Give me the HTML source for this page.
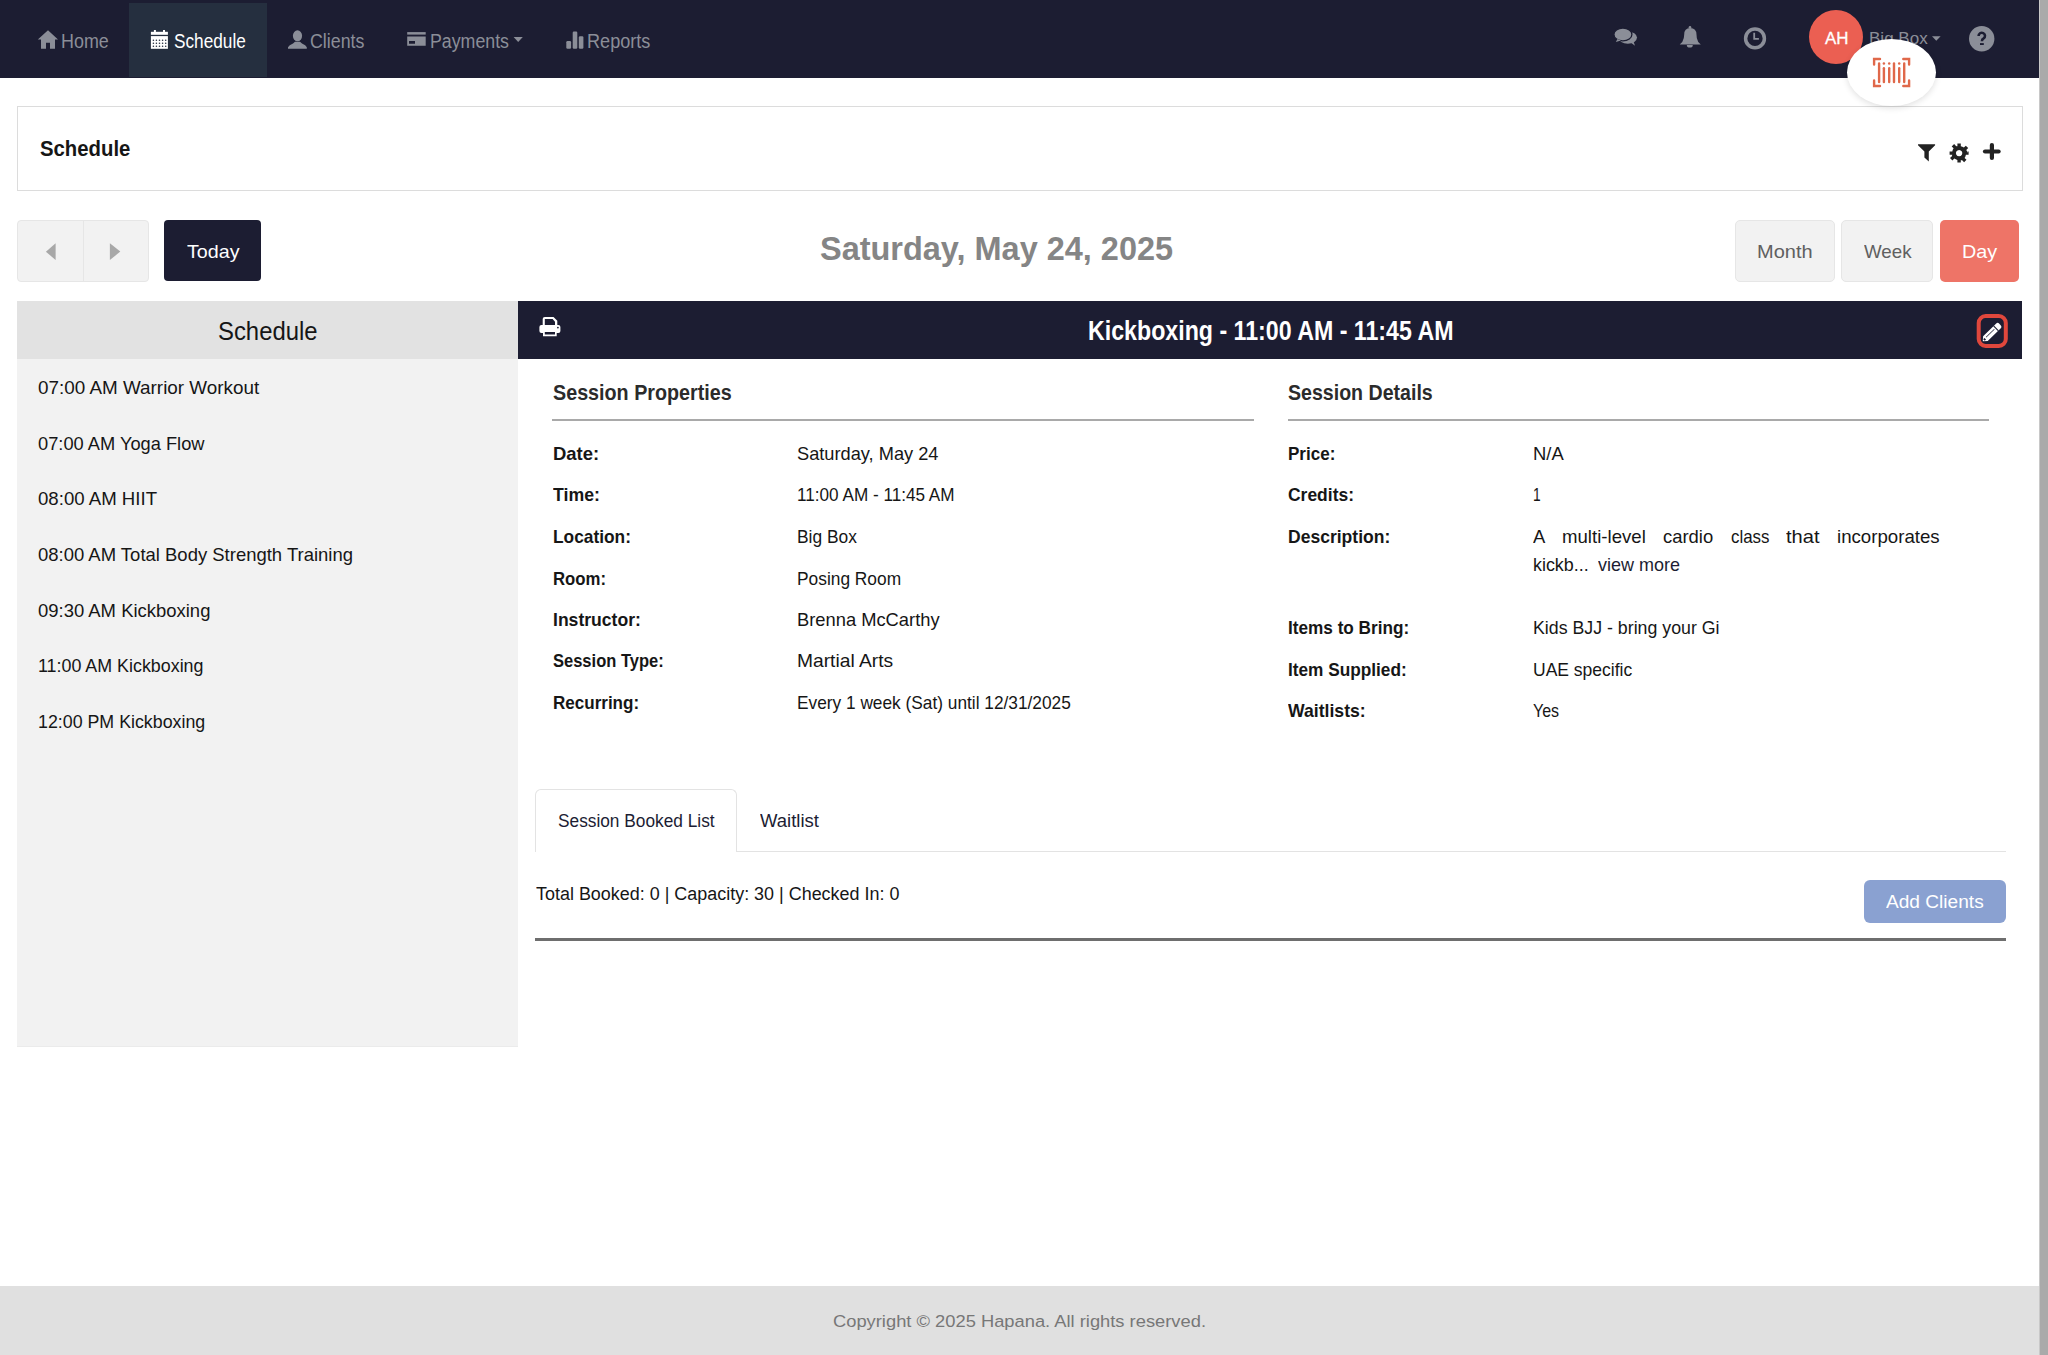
<!DOCTYPE html>
<html lang="en">
<head>
<meta charset="utf-8">
<title>Schedule - Hapana</title>
<style>
html,body{margin:0;padding:0;}
body{width:2048px;height:1355px;overflow:hidden;position:relative;background:#ffffff;font-family:"Liberation Sans",sans-serif;}
.b{position:absolute;box-sizing:border-box;}
.tx{position:absolute;white-space:nowrap;transform-origin:0 0;display:inline-block;}
svg{position:absolute;overflow:visible;}
</style>
</head>
<body>
<!-- navbar -->
<div class="b" style="left:0;top:0;width:2039px;height:78px;background:#1c1d32;"></div>
<div class="b" style="left:129px;top:3px;width:138px;height:74px;background:#252f3f;"></div>
<!-- scrollbar -->
<div class="b" style="left:2039px;top:0;width:9px;height:1355px;background:#aaaaaa;border-left:1px solid #c8c8c8;"></div>
<!-- schedule card -->
<div class="b" style="left:17px;top:106px;width:2006px;height:85px;border:1px solid #dcdcdc;background:#fff;"></div>
<!-- nav group -->
<div class="b" style="left:17px;top:220px;width:132px;height:62px;background:#f2f2f2;border:1px solid #e6e6e6;border-radius:4px;"></div>
<div class="b" style="left:83px;top:221px;width:1px;height:60px;background:#e6e6e6;"></div>
<div class="b" style="left:164px;top:220px;width:97px;height:61px;background:#1c1d32;border-radius:4px;"></div>
<!-- view buttons -->
<div class="b" style="left:1735px;top:219.5px;width:100px;height:62px;background:#f2f2f2;border:1px solid #e6e6e6;border-radius:5px;"></div>
<div class="b" style="left:1841px;top:219.5px;width:92px;height:62px;background:#f2f2f2;border:1px solid #e6e6e6;border-radius:5px;"></div>
<div class="b" style="left:1940px;top:220px;width:79px;height:62px;background:#ee7467;border-radius:5px;"></div>
<!-- sidebar -->
<div class="b" style="left:17px;top:301px;width:501px;height:746px;background:#f2f2f2;border-bottom:1px solid #ebebeb;"></div>
<div class="b" style="left:17px;top:301px;width:501px;height:58px;background:#e2e2e2;"></div>
<!-- session header -->
<div class="b" style="left:518px;top:301px;width:1504px;height:58px;background:#1c1d32;"></div>
<!-- underlines -->
<div class="b" style="left:552px;top:419px;width:702px;height:1.5px;background:#a9a9a9;"></div>
<div class="b" style="left:1288px;top:419px;width:701px;height:1.5px;background:#a9a9a9;"></div>
<!-- tabs -->
<div class="b" style="left:535px;top:851px;width:1471px;height:1px;background:#e3e3e3;"></div>
<div class="b" style="left:535px;top:789px;width:202px;height:63px;background:#fff;border:1px solid #e3e3e3;border-bottom:none;border-radius:6px 6px 0 0;"></div>
<!-- add clients -->
<div class="b" style="left:1864px;top:880px;width:142px;height:43px;background:#8aa1d1;border-radius:6px;"></div>
<div class="b" style="left:535px;top:937.5px;width:1471px;height:3px;background:#6e6e6e;"></div>
<!-- footer -->
<div class="b" style="left:0;top:1286px;width:2039px;height:69px;background:#e0e0e0;"></div>
<!-- avatar -->
<div class="b" style="left:1809px;top:10px;width:54px;height:54px;border-radius:50%;background:#eb5f52;"></div>
<!-- ===== icons ===== -->
<svg width="2048" height="1355" style="left:0;top:0;" viewBox="0 0 2048 1355">
  <!-- home -->
  <path fill="#8b8e98" d="M48 30.2 L37.8 39.6 L41 39.6 L41 48.8 L46 48.8 L46 42.8 L50 42.8 L50 48.8 L55 48.8 L55 39.6 L58 39.6 Z"/>
  <!-- calendar -->
  <g fill="#ffffff">
    <rect x="153.9" y="30" width="2" height="3"/>
    <rect x="163" y="30" width="2" height="3"/>
    <rect x="150.9" y="31.8" width="17" height="3"/>
    <rect x="150.9" y="36.1" width="17" height="12.7"/>
  </g>
  <g fill="#252f3f">
    <circle cx="153.4" cy="40.2" r="0.8"/><circle cx="156.4" cy="40.2" r="0.8"/><circle cx="159.5" cy="40.2" r="0.8"/><circle cx="162.6" cy="40.2" r="0.8"/><circle cx="165.7" cy="40.2" r="0.8"/>
    <circle cx="153.4" cy="43.3" r="0.8"/><circle cx="156.4" cy="43.3" r="0.8"/><circle cx="159.5" cy="43.3" r="0.8"/><circle cx="162.6" cy="43.3" r="0.8"/><circle cx="165.7" cy="43.3" r="0.8"/>
    <circle cx="153.4" cy="46.3" r="0.8"/><circle cx="156.4" cy="46.3" r="0.8"/><circle cx="159.5" cy="46.3" r="0.8"/><circle cx="162.6" cy="46.3" r="0.8"/><circle cx="165.7" cy="46.3" r="0.8"/>
  </g>
  <!-- user -->
  <g fill="#8b8e98">
    <ellipse cx="297.5" cy="35.8" rx="4.6" ry="5.5"/>
    <path d="M288 48.8 L288 47.2 Q289 45.2 293 43.6 L295 41.8 L300 41.8 L302 43.6 Q306 45.2 306.8 47.2 L306.8 48.8 Z"/>
  </g>
  <!-- payments -->
  <g fill="#8b8e98">
    <rect x="407.2" y="32.1" width="18.5" height="2.5"/>
    <path fill-rule="evenodd" d="M407.2 36.4 H425.7 V45.7 H407.2 Z M409 41.1 V43.8 H415 V41.1 Z"/>
    <path d="M513.6 36.9 L522.8 36.9 L518.2 42 Z"/>
  </g>
  <path fill="#8b8e98" d="M1932 36.2 L1940.6 36.2 L1936.3 40.8 Z"/>
  <!-- reports -->
  <g fill="#8b8e98">
    <rect x="566.3" y="41.1" width="4.8" height="7.7" rx="1.2"/>
    <rect x="572.7" y="31.6" width="4.6" height="17.2" rx="1.2"/>
    <rect x="578.8" y="36.3" width="4.6" height="12.5" rx="1.2"/>
  </g>
  <!-- chat -->
  <g fill="#8b8e98">
    <ellipse cx="1627.8" cy="37.6" rx="9.2" ry="6.2"/>
    <path d="M1630 42 L1635 45.8 L1633 40 Z"/>
    <ellipse cx="1622.9" cy="34.4" rx="9" ry="6.4" stroke="#1c1d32" stroke-width="1.3"/>
    <path d="M1617.5 39 L1615.8 42 L1621 40.5 Z"/>
  </g>
  <!-- bell -->
  <g fill="#8b8e98">
    <circle cx="1690" cy="27.3" r="1.3"/>
    <path d="M1684.2 34.5 Q1684.2 28.2 1690.2 28 Q1696.4 28.2 1696.5 34.5 L1696.8 38 Q1697.5 42.3 1700.8 44.5 L1679.7 44.5 Q1683 42.3 1683.8 38 Z"/>
    <path d="M1686.8 45 A3 2.6 0 0 0 1692.8 45 Z"/>
  </g>
  <!-- clock -->
  <circle cx="1755" cy="38.4" r="9.4" fill="none" stroke="#8b8e98" stroke-width="3.5"/>
  <path d="M1754.2 32.7 V38.9 H1758.9" fill="none" stroke="#8b8e98" stroke-width="1.8"/>
  <!-- help -->
  <circle cx="1981.7" cy="38.8" r="12.7" fill="#8b8e98"/>
  <path d="M1978.6 36 A3.2 3.1 0 1 1 1983.6 38.4 Q1981.9 39.3 1981.9 41.2" fill="none" stroke="#1c1d32" stroke-width="2.6"/>
  <rect x="1980" y="43.1" width="3.8" height="1.9" fill="#1c1d32"/>
  <!-- filter -->
  <path fill="#222222" d="M1918 144.3 L1935.1 144.3 L1935.1 145.3 L1928.8 151.6 L1928.8 161.6 L1924.4 157.5 L1924.4 151.6 L1918 145.3 Z"/>
  <!-- gear -->
  <g transform="translate(1959.1 153.1)" fill="#222222">
    <path fill-rule="evenodd" d="M-1.7 -9.5 H1.7 V-6.8 A7 7 0 0 1 4.8 -5.5 L6.7 -7.4 L9.1 -5 L7.2 -3.1 A7 7 0 0 1 8.5 -0 V0 L8.5 -1.7 H9.5 V1.7 H6.8 A7 7 0 0 1 5.5 4.8 L7.4 6.7 L5 9.1 L3.1 7.2 A7 7 0 0 1 1.7 6.8 V9.5 H-1.7 V6.8 A7 7 0 0 1 -4.8 5.5 L-6.7 7.4 L-9.1 5 L-7.2 3.1 A7 7 0 0 1 -6.8 1.7 H-9.5 V-1.7 H-6.8 A7 7 0 0 1 -5.5 -4.8 L-7.4 -6.7 L-5 -9.1 L-3.1 -7.2 A7 7 0 0 1 -1.7 -6.8 Z M0 -3.2 A3.2 3.2 0 1 0 0.01 -3.2 Z"/>
  </g>
  <!-- plus -->
  <g stroke="#222222" stroke-width="4.2" stroke-linecap="round">
    <path d="M1991.9 145 V158"/>
    <path d="M1985 151.5 H1998.6"/>
  </g>
  <!-- arrows -->
  <path fill="#a8a8a8" d="M45.9 251.7 L55.6 243.3 L55.6 260 Z"/>
  <path fill="#a8a8a8" d="M120.3 251.6 L109.9 243.3 L109.9 260 Z"/>
  <!-- print -->
  <g fill="#ffffff">
    <path fill-rule="evenodd" d="M542.7 326 V319 Q542.7 316.9 544.8 316.9 H553.5 L557.3 320.8 V326 H555 V321.8 L552.6 319 H544.8 V326 Z"/>
    <path fill-rule="evenodd" d="M541.4 325.1 H558.4 Q560.4 325.1 560.4 327.1 V331.1 Q560.4 333.1 558.4 333.1 H556.7 V336.3 H543 V333.1 H541.4 Q539.4 333.1 539.4 331.1 V327.1 Q539.4 325.1 541.4 325.1 Z M544.8 332 V334.6 H555 V332 Z"/>
  </g>
  <circle cx="557.9" cy="327.6" r="0.9" fill="#1c1d32"/>
  <!-- edit -->
  <rect x="1978.7" y="316" width="27.1" height="30" rx="7" fill="none" stroke="#e0473c" stroke-width="4"/>
  <g transform="translate(1991.6 332.6) rotate(-44)">
    <path fill="#ffffff" d="M-12.3 0 L-8.6 -3.3 H9.6 Q11.6 -3.3 11.6 -1.3 V1.3 Q11.6 3.3 9.6 3.3 H-8.6 Z"/>
    <rect x="5.6" y="-3.5" width="1.1" height="7" fill="#1c1d32"/>
    <rect x="-7.2" y="-0.9" width="11.5" height="0.7" fill="#1c1d32"/>
    <rect x="-10.6" y="-1.1" width="1.8" height="2.2" fill="#1c1d32"/>
  </g>
</svg>

<!-- barcode bubble -->
<div class="b" style="left:1847px;top:39px;width:89px;height:67px;border-radius:50%;background:#fff;box-shadow:0 2px 6px rgba(0,0,0,0.12);z-index:5;"></div>
<svg width="2048" height="1355" style="left:0;top:0;z-index:6;" viewBox="0 0 2048 1355">
  <!-- barcode -->
  <g fill="none" stroke="#e0684a" stroke-width="2.4" stroke-linecap="round">
    <path d="M1880 59 H1874.1 V64.5"/>
    <path d="M1874.1 80.5 V86 H1880"/>
    <path d="M1903.3 59 H1909.1 V64.5"/>
    <path d="M1909.1 80.5 V86 H1903.3"/>
    <path d="M1879.1 63.5 V82"/>
    <path d="M1894 63.5 V82"/>
    <path d="M1904.2 63.5 V82"/>
    <path d="M1883.9 68.2 V82"/>
    <path d="M1889.2 68.2 V82"/>
    <path d="M1899.2 68.2 V82"/>
  </g>
  <g fill="#e0684a">
    <circle cx="1883.9" cy="63.6" r="1.25"/><circle cx="1889.2" cy="63.6" r="1.25"/><circle cx="1899.2" cy="63.6" r="1.25"/>
  </g>
</svg>

<span class="tx" id="t0" style="left:60.5px;top:30.9px;font-size:20.00px;line-height:20.00px;font-weight:400;color:#8b8e98;transform:scaleX(0.8958);">Home</span>
<span class="tx" id="t1" style="left:173.6px;top:30.9px;font-size:20.00px;line-height:20.00px;font-weight:400;color:#ffffff;transform:scaleX(0.8608);">Schedule</span>
<span class="tx" id="t2" style="left:310.3px;top:30.9px;font-size:20.00px;line-height:20.00px;font-weight:400;color:#8b8e98;transform:scaleX(0.8898);">Clients</span>
<span class="tx" id="t3" style="left:430.0px;top:30.9px;font-size:20.00px;line-height:20.00px;font-weight:400;color:#8b8e98;transform:scaleX(0.8883);">Payments</span>
<span class="tx" id="t4" style="left:587.0px;top:30.9px;font-size:20.00px;line-height:20.00px;font-weight:400;color:#8b8e98;transform:scaleX(0.9053);">Reports</span>
<span class="tx" id="t5" style="left:1824.5px;top:30.2px;font-size:17.26px;line-height:17.26px;font-weight:400;color:#ffffff;transform:scaleX(0.9804);-webkit-text-stroke:0.3px #fff;">AH</span>
<span class="tx" id="t6" style="left:1868.8px;top:30.2px;font-size:17.26px;line-height:17.26px;font-weight:400;color:#8b8e98;transform:scaleX(0.9873);">Big Box</span>
<span class="tx" id="t7" style="left:39.5px;top:137.3px;font-size:22.88px;line-height:22.88px;font-weight:700;color:#161616;transform:scaleX(0.8889);">Schedule</span>
<span class="tx" id="t8" style="left:186.8px;top:242.0px;font-size:19.18px;line-height:19.18px;font-weight:400;color:#ffffff;transform:scaleX(1.0260);">Today</span>
<span class="tx" id="t9" style="left:820.1px;top:231.8px;font-size:33.56px;line-height:33.56px;font-weight:700;color:#858585;transform:scaleX(0.9677);">Saturday, May 24, 2025</span>
<span class="tx" id="t10" style="left:1757.4px;top:241.8px;font-size:19.18px;line-height:19.18px;font-weight:400;color:#606060;transform:scaleX(1.0432);">Month</span>
<span class="tx" id="t11" style="left:1864.0px;top:241.8px;font-size:19.18px;line-height:19.18px;font-weight:400;color:#606060;transform:scaleX(0.9780);">Week</span>
<span class="tx" id="t12" style="left:1962.2px;top:241.8px;font-size:19.18px;line-height:19.18px;font-weight:400;color:#ffffff;transform:scaleX(1.0324);">Day</span>
<span class="tx" id="t13" style="left:217.9px;top:319.0px;font-size:25.21px;line-height:25.21px;font-weight:400;color:#161616;transform:scaleX(0.9476);">Schedule</span>
<span class="tx" id="t14" style="left:38.2px;top:378.0px;font-size:19.04px;line-height:19.04px;font-weight:400;color:#161616;transform:scaleX(0.9916);">07:00 AM Warrior Workout</span>
<span class="tx" id="t15" style="left:38.2px;top:433.5px;font-size:19.04px;line-height:19.04px;font-weight:400;color:#161616;transform:scaleX(0.9595);">07:00 AM Yoga Flow</span>
<span class="tx" id="t16" style="left:38.2px;top:489.0px;font-size:19.04px;line-height:19.04px;font-weight:400;color:#161616;transform:scaleX(0.9783);">08:00 AM HIIT</span>
<span class="tx" id="t17" style="left:38.2px;top:545.2px;font-size:19.04px;line-height:19.04px;font-weight:400;color:#161616;transform:scaleX(0.9709);">08:00 AM Total Body Strength Training</span>
<span class="tx" id="t18" style="left:38.2px;top:600.8px;font-size:19.04px;line-height:19.04px;font-weight:400;color:#161616;transform:scaleX(0.9700);">09:30 AM Kickboxing</span>
<span class="tx" id="t19" style="left:38.2px;top:656.3px;font-size:19.04px;line-height:19.04px;font-weight:400;color:#161616;transform:scaleX(0.9386);">11:00 AM Kickboxing</span>
<span class="tx" id="t20" style="left:38.2px;top:711.8px;font-size:19.04px;line-height:19.04px;font-weight:400;color:#161616;transform:scaleX(0.9352);">12:00 PM Kickboxing</span>
<span class="tx" id="t21" style="left:1088.0px;top:317.0px;font-size:27.40px;line-height:27.40px;font-weight:700;color:#ffffff;transform:scaleX(0.8465);">Kickboxing - 11:00 AM - 11:45 AM</span>
<span class="tx" id="t22" style="left:552.6px;top:382.4px;font-size:21.92px;line-height:21.92px;font-weight:700;color:#2b2b2b;transform:scaleX(0.9005);">Session Properties</span>
<span class="tx" id="t23" style="left:1287.8px;top:382.4px;font-size:21.92px;line-height:21.92px;font-weight:700;color:#2b2b2b;transform:scaleX(0.8936);">Session Details</span>
<span class="tx" id="t24" style="left:552.6px;top:444.1px;font-size:19.18px;line-height:19.18px;font-weight:700;color:#161616;transform:scaleX(0.9634);">Date:</span>
<span class="tx" id="t25" style="left:797.4px;top:444.1px;font-size:19.18px;line-height:19.18px;font-weight:400;color:#161616;transform:scaleX(0.9507);">Saturday, May 24</span>
<span class="tx" id="t26" style="left:552.6px;top:485.1px;font-size:19.18px;line-height:19.18px;font-weight:700;color:#161616;transform:scaleX(0.9233);">Time:</span>
<span class="tx" id="t27" style="left:797.4px;top:485.1px;font-size:19.18px;line-height:19.18px;font-weight:400;color:#161616;transform:scaleX(0.8944);">11:00 AM - 11:45 AM</span>
<span class="tx" id="t28" style="left:552.6px;top:526.5px;font-size:19.18px;line-height:19.18px;font-weight:700;color:#161616;transform:scaleX(0.9030);">Location:</span>
<span class="tx" id="t29" style="left:797.4px;top:526.5px;font-size:19.18px;line-height:19.18px;font-weight:400;color:#161616;transform:scaleX(0.9065);">Big Box</span>
<span class="tx" id="t30" style="left:552.6px;top:568.8px;font-size:19.18px;line-height:19.18px;font-weight:700;color:#161616;transform:scaleX(0.8731);">Room:</span>
<span class="tx" id="t31" style="left:797.4px;top:568.8px;font-size:19.18px;line-height:19.18px;font-weight:400;color:#161616;transform:scaleX(0.9045);">Posing Room</span>
<span class="tx" id="t32" style="left:552.6px;top:609.8px;font-size:19.18px;line-height:19.18px;font-weight:700;color:#161616;transform:scaleX(0.9168);">Instructor:</span>
<span class="tx" id="t33" style="left:797.4px;top:609.8px;font-size:19.18px;line-height:19.18px;font-weight:400;color:#161616;transform:scaleX(0.9559);">Brenna McCarthy</span>
<span class="tx" id="t34" style="left:552.6px;top:651.2px;font-size:19.18px;line-height:19.18px;font-weight:700;color:#161616;transform:scaleX(0.8611);">Session Type:</span>
<span class="tx" id="t35" style="left:797.4px;top:651.2px;font-size:19.18px;line-height:19.18px;font-weight:400;color:#161616;transform:scaleX(1.0032);">Martial Arts</span>
<span class="tx" id="t36" style="left:552.6px;top:692.6px;font-size:19.18px;line-height:19.18px;font-weight:700;color:#161616;transform:scaleX(0.8882);">Recurring:</span>
<span class="tx" id="t37" style="left:797.4px;top:692.6px;font-size:19.18px;line-height:19.18px;font-weight:400;color:#161616;transform:scaleX(0.9014);">Every 1 week (Sat) until 12/31/2025</span>
<span class="tx" id="t38" style="left:1287.8px;top:444.1px;font-size:19.18px;line-height:19.18px;font-weight:700;color:#161616;transform:scaleX(0.8894);">Price:</span>
<span class="tx" id="t39" style="left:1532.7px;top:444.1px;font-size:19.18px;line-height:19.18px;font-weight:400;color:#161616;transform:scaleX(0.9603);">N/A</span>
<span class="tx" id="t40" style="left:1287.8px;top:485.1px;font-size:19.18px;line-height:19.18px;font-weight:700;color:#161616;transform:scaleX(0.9109);">Credits:</span>
<span class="tx" id="t41" style="left:1532.7px;top:485.1px;font-size:19.18px;line-height:19.18px;font-weight:400;color:#161616;transform:scaleX(0.7200);">1</span>
<span class="tx" id="t42" style="left:1287.8px;top:526.5px;font-size:19.18px;line-height:19.18px;font-weight:700;color:#161616;transform:scaleX(0.9145);">Description:</span>
<span class="tx" id="t43" style="left:1287.8px;top:618.1px;font-size:19.18px;line-height:19.18px;font-weight:700;color:#161616;transform:scaleX(0.8959);">Items to Bring:</span>
<span class="tx" id="t44" style="left:1532.7px;top:618.1px;font-size:19.18px;line-height:19.18px;font-weight:400;color:#161616;transform:scaleX(0.9261);">Kids BJJ - bring your Gi</span>
<span class="tx" id="t45" style="left:1287.8px;top:659.8px;font-size:19.18px;line-height:19.18px;font-weight:700;color:#161616;transform:scaleX(0.8986);">Item Supplied:</span>
<span class="tx" id="t46" style="left:1532.7px;top:659.8px;font-size:19.18px;line-height:19.18px;font-weight:400;color:#161616;transform:scaleX(0.9127);">UAE specific</span>
<span class="tx" id="t47" style="left:1287.8px;top:700.8px;font-size:19.18px;line-height:19.18px;font-weight:700;color:#161616;transform:scaleX(0.9194);">Waitlists:</span>
<span class="tx" id="t48" style="left:1532.7px;top:700.8px;font-size:19.18px;line-height:19.18px;font-weight:400;color:#161616;transform:scaleX(0.8344);">Yes</span>
<span class="tx" id="t49" style="left:1532.7px;top:526.5px;font-size:19.18px;line-height:19.18px;font-weight:400;color:#161616;transform:scaleX(0.9612);">A</span>
<span class="tx" id="t50" style="left:1561.6px;top:526.5px;font-size:19.18px;line-height:19.18px;font-weight:400;color:#161616;transform:scaleX(0.9711);">multi-level</span>
<span class="tx" id="t51" style="left:1662.9px;top:526.5px;font-size:19.18px;line-height:19.18px;font-weight:400;color:#161616;transform:scaleX(0.9613);">cardio</span>
<span class="tx" id="t52" style="left:1730.6px;top:526.5px;font-size:19.18px;line-height:19.18px;font-weight:400;color:#161616;transform:scaleX(0.8813);">class</span>
<span class="tx" id="t53" style="left:1786.2px;top:526.5px;font-size:19.18px;line-height:19.18px;font-weight:400;color:#161616;transform:scaleX(1.0474);">that</span>
<span class="tx" id="t54" style="left:1836.8px;top:526.5px;font-size:19.18px;line-height:19.18px;font-weight:400;color:#161616;transform:scaleX(0.9733);">incorporates</span>
<span class="tx" id="t55" style="left:1532.7px;top:554.6px;font-size:19.18px;line-height:19.18px;font-weight:400;color:#161616;transform:scaleX(0.9334);">kickb...</span>
<span class="tx" id="t56" style="left:1598.0px;top:554.6px;font-size:19.18px;line-height:19.18px;font-weight:400;color:#1c1d33;transform:scaleX(0.9385);">view more</span>
<span class="tx" id="t57" style="left:557.7px;top:812.3px;font-size:18.49px;line-height:18.49px;font-weight:400;color:#1c1d33;transform:scaleX(0.9349);">Session Booked List</span>
<span class="tx" id="t58" style="left:759.9px;top:812.3px;font-size:18.49px;line-height:18.49px;font-weight:400;color:#1c1d33;transform:scaleX(1.0004);">Waitlist</span>
<span class="tx" id="t59" style="left:536.1px;top:885.3px;font-size:18.63px;line-height:18.63px;font-weight:400;color:#161616;transform:scaleX(0.9642);">Total Booked: 0 | Capacity: 30 | Checked In: 0</span>
<span class="tx" id="t60" style="left:1886.4px;top:892.5px;font-size:18.63px;line-height:18.63px;font-weight:400;color:#ffffff;transform:scaleX(1.0266);">Add Clients</span>
<span class="tx" id="t61" style="left:832.7px;top:1313.2px;font-size:17.40px;line-height:17.40px;font-weight:400;color:#777777;transform:scaleX(1.0535);">Copyright © 2025 Hapana. All rights reserved.</span>
</body>
</html>
